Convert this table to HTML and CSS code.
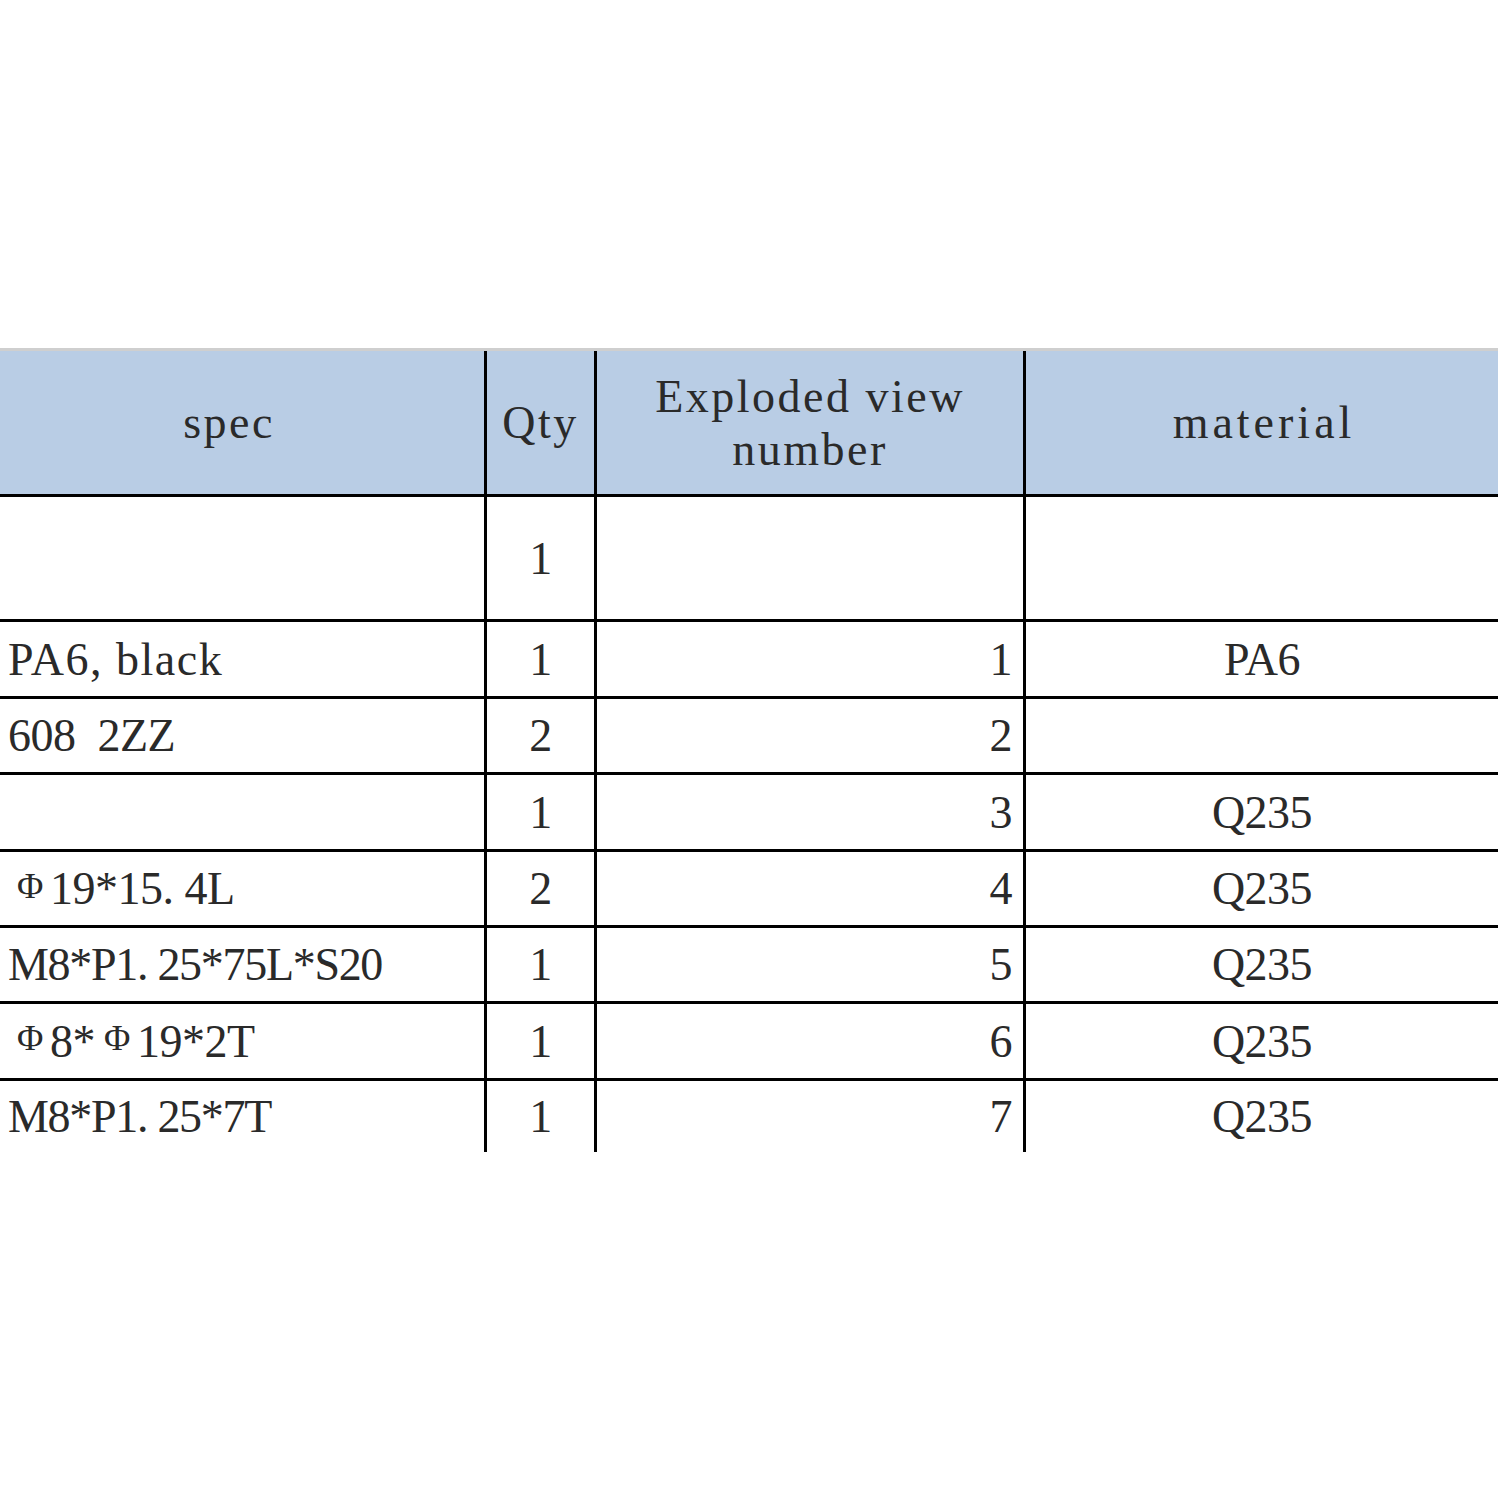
FILE: index.html
```html
<!DOCTYPE html>
<html>
<head>
<meta charset="utf-8">
<link rel="stylesheet" href="styles.css">
</head>
<body>
<div class="page">
  <div class="sheet">
    <div class="row head">
      <div class="cell c1 spec-head">spec</div>
      <div class="cell c2">Qty</div>
      <div class="cell c3 center">Exploded view<br>number</div>
      <div class="cell c4 mat-head">material</div>
    </div>
    <div class="row tall">
      <div class="cell c1"></div>
      <div class="cell c2">1</div>
      <div class="cell c3"></div>
      <div class="cell c4"></div>
    </div>
    <div class="row r77">
      <div class="cell c1 wide">PA6,&nbsp;black</div>
      <div class="cell c2">1</div>
      <div class="cell c3">1</div>
      <div class="cell c4">PA6</div>
    </div>
    <div class="row r76">
      <div class="cell c1">608&nbsp;&nbsp;2ZZ</div>
      <div class="cell c2">2</div>
      <div class="cell c3">2</div>
      <div class="cell c4"></div>
    </div>
    <div class="row r77">
      <div class="cell c1"></div>
      <div class="cell c2">1</div>
      <div class="cell c3">3</div>
      <div class="cell c4">Q235</div>
    </div>
    <div class="row r76">
      <div class="cell c1"><span class="phi">Φ</span>19*15.&nbsp;4L</div>
      <div class="cell c2">2</div>
      <div class="cell c3">4</div>
      <div class="cell c4">Q235</div>
    </div>
    <div class="row r76">
      <div class="cell c1 tight">M8*P1.&nbsp;25*75L*S20</div>
      <div class="cell c2">1</div>
      <div class="cell c3">5</div>
      <div class="cell c4">Q235</div>
    </div>
    <div class="row r77">
      <div class="cell c1"><span class="phi">Φ</span>8*<span class="phi">Φ</span>19*2T</div>
      <div class="cell c2">1</div>
      <div class="cell c3">6</div>
      <div class="cell c4">Q235</div>
    </div>
    <div class="row last">
      <div class="cell c1 tight">M8*P1.&nbsp;25*7T</div>
      <div class="cell c2">1</div>
      <div class="cell c3">7</div>
      <div class="cell c4">Q235</div>
    </div>
  </div>
</div>
</body>
</html>
```

FILE: styles.css
```css
html, body {
  margin: 0;
  padding: 0;
  background: #ffffff;
}

.page {
  padding-top: 348px;
  width: 1500px;
  height: 1152px;
}

.sheet {
  width: 1498px;
  font-family: "Liberation Serif", "Times New Roman", serif;
  font-size: 46px;
  color: #2a2a2a;
}

.row {
  display: grid;
  grid-template-columns: 487px 110px 429px 472px;
  height: 77px;
  border-bottom: 3px solid #000;
  box-sizing: border-box;
}

.row.r77 {
  height: 77px;
}

.row.r76 {
  height: 76px;
}

.row.head {
  height: 149px;
  background: #b9cde5;
  border-top: 3px solid #cfcfcf;
}

.row.head .cell {
  text-align: center;
  justify-content: center;
  line-height: 53px;
  letter-spacing: 2.5px;
}

.row.tall {
  height: 125px;
}

.row.last {
  height: 71px;
  border-bottom: none;
}

.cell {
  display: flex;
  align-items: center;
  box-sizing: border-box;
  border-right: 3px solid #000;
  white-space: nowrap;
  letter-spacing: -0.5px;
}

.c1 {
  justify-content: flex-start;
  padding-left: 8px;
}

.c1.wide {
  letter-spacing: 1.5px;
}

.c1.tight {
  letter-spacing: -1.3px;
}

.row.head .spec-head {
  padding-left: 0;
  padding-right: 26px;
}

.row.head .mat-head {
  letter-spacing: 4px;
  padding-left: 4px;
}

.c2 {
  justify-content: center;
}

.c3 {
  justify-content: flex-end;
  padding-right: 11px;
}

.c3.center {
  padding-right: 0;
}

.c4 {
  justify-content: center;
  border-right: none;
}

.phi {
  display: inline-block;
  font-size: 36px;
  width: 36px;
  margin-left: 4px;
  margin-right: 2px;
  position: relative;
  top: -3px;
  text-align: center;
}
```
